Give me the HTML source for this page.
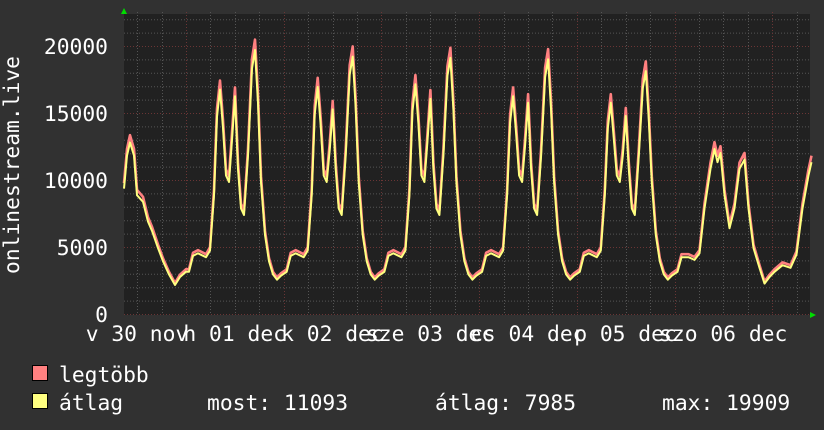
<!DOCTYPE html>
<html><head><meta charset="utf-8"><style>
html,body{margin:0;padding:0;background:#313131;width:824px;height:430px;overflow:hidden}
svg{display:block}
text{font-family:"DejaVu Sans Mono","Liberation Mono",monospace;fill:#fff}
</style></head><body>
<svg id="g" width="824" height="430" xmlns="http://www.w3.org/2000/svg">
<rect x="0" y="0" width="824" height="430" fill="#313131"/>
<rect x="124" y="14" width="686" height="301" fill="#212121"/>
<g id="grid"></g>
<g id="data"></g>
<polygon points="121,14 127,14 124,8" fill="#00dd00"/>
<polygon points="810,312 810,318 816,315" fill="#00dd00"/>
<g font-size="21.3" text-anchor="end">
<text x="108" y="54">20000</text>
<text x="108" y="121">15000</text>
<text x="108" y="188">10000</text>
<text x="108" y="255">5000</text>
<text x="108" y="322">0</text>
</g>
<text transform="translate(19,165) rotate(-90)" font-size="21.3" text-anchor="middle">onlinestream.live</text>
<g id="xl" font-size="21.3" text-anchor="middle"></g>
<rect x="32.5" y="365.5" width="15" height="15" fill="#ff8080" stroke="#000"/>
<rect x="32.5" y="393.5" width="15" height="15" fill="#ffff80" stroke="#000"/>
<g font-size="21.3">
<text x="59" y="382">legtöbb</text>
<text x="59" y="410">átlag</text>
<text x="207" y="410">most: 11093</text>
<text x="435" y="410">átlag: 7985</text>
<text x="662" y="410">max: 19909</text>
</g>
</svg>
<script>
var NS="http://www.w3.org/2000/svg";
function el(p,t,a){var e=document.createElementNS(NS,t);for(var k in a)e.setAttribute(k,a[k]);p.appendChild(e);return e;}
var grid=document.getElementById('grid');
function Y(v){return 314-v*0.0134;}
for(var v=0;v<=22000;v+=1000){var y=Y(v);if(y<14)break;
 el(grid,'line',{x1:124,x2:810,y1:y+0.5,y2:y+0.5,stroke:(v%5000==0?'#6a3535':'#555'),'stroke-dasharray':'1,2','stroke-width':1});}
var D=97.7,x0=186;
for(var i=-3;i<30;i++){var x=x0+i*D/4;if(x<124||x>810)continue;
 el(grid,'line',{x1:Math.round(x)+0.5,x2:Math.round(x)+0.5,y1:12,y2:315,stroke:(i%4==0?'#6a3535':'#555'),'stroke-dasharray':'1,2','stroke-width':1});}
var xl=document.getElementById('xl');
var labs=["v 30 nov","h 01 dec","k 02 dec","sze 03 dec","cs 04 dec","p 05 dec","szo 06 dec"];
for(var i=0;i<labs.length;i++){var t=el(xl,'text',{x:137+D*i,y:341});t.textContent=labs[i];}
function day(p1,p2,p3){return [[0,3000],[3,3200],[7,4400],[12,4600],[20,4300],[24,4800],[28,9000],[31,p1*0.88],[34,p1],[37,p1*0.83],[40,10500],[43,10000],[46,p2*0.8],[49,p2],[52,11000],[55,8000],[58,7500],[62,12000],[66,p3*0.93],[69,p3],[72,p3*0.8],[75,10000],[79,6000],[83,4000],[87,3000],[91,2600],[95,2900]];}
var pts=[[124,9500],[127,12000],[130,13000],[134,12000],[137,9000],[143,8500],[148,7000],[152,6300],[158,5000],[163,4000],[169,3000],[175,2200],[180,2800],[186,3200]];
var peaks=[[17000,16500,20000],[17200,15500,19500],[17400,16300,19400],[16500,16000,19300],[16000,15000,18400]];
for(var d=0;d<5;d++){var tp=day.apply(null,peaks[d]);for(var j=1;j<tp.length;j++)pts.push([x0+D*d+tp[j][0],tp[j][1]]);}
var s=x0+D*5;
[[3,3200],[7,4300],[14,4300],[20,4100],[25,4600],[30,8000],[36,11000],[40,12500],[43,11500],[46,12200],[50,9000],[55,6500],[60,8000],[65,11000],[70,11700],[74,8000],[79,5000],[85,3500],[90,2300],[95,2800],[100,3200],[108,3700],[116,3500],[122,4500],[128,8000],[134,10500],[137,11500]].forEach(function(p){pts.push([s+p[0],p[1]]);});
var data=document.getElementById('data');
function str(f,off){return pts.map(function(p){return p[0].toFixed(1)+','+Y(p[1]*f+off).toFixed(1);}).join(' ');}
el(data,'polyline',{points:str(1.02,80),fill:'none',stroke:'#ff8080','stroke-width':2.6,'stroke-linejoin':'round'});
el(data,'polyline',{points:str(0.985,0),fill:'none',stroke:'#ffff80','stroke-width':2,'stroke-linejoin':'round'});
</script>
</body></html>
